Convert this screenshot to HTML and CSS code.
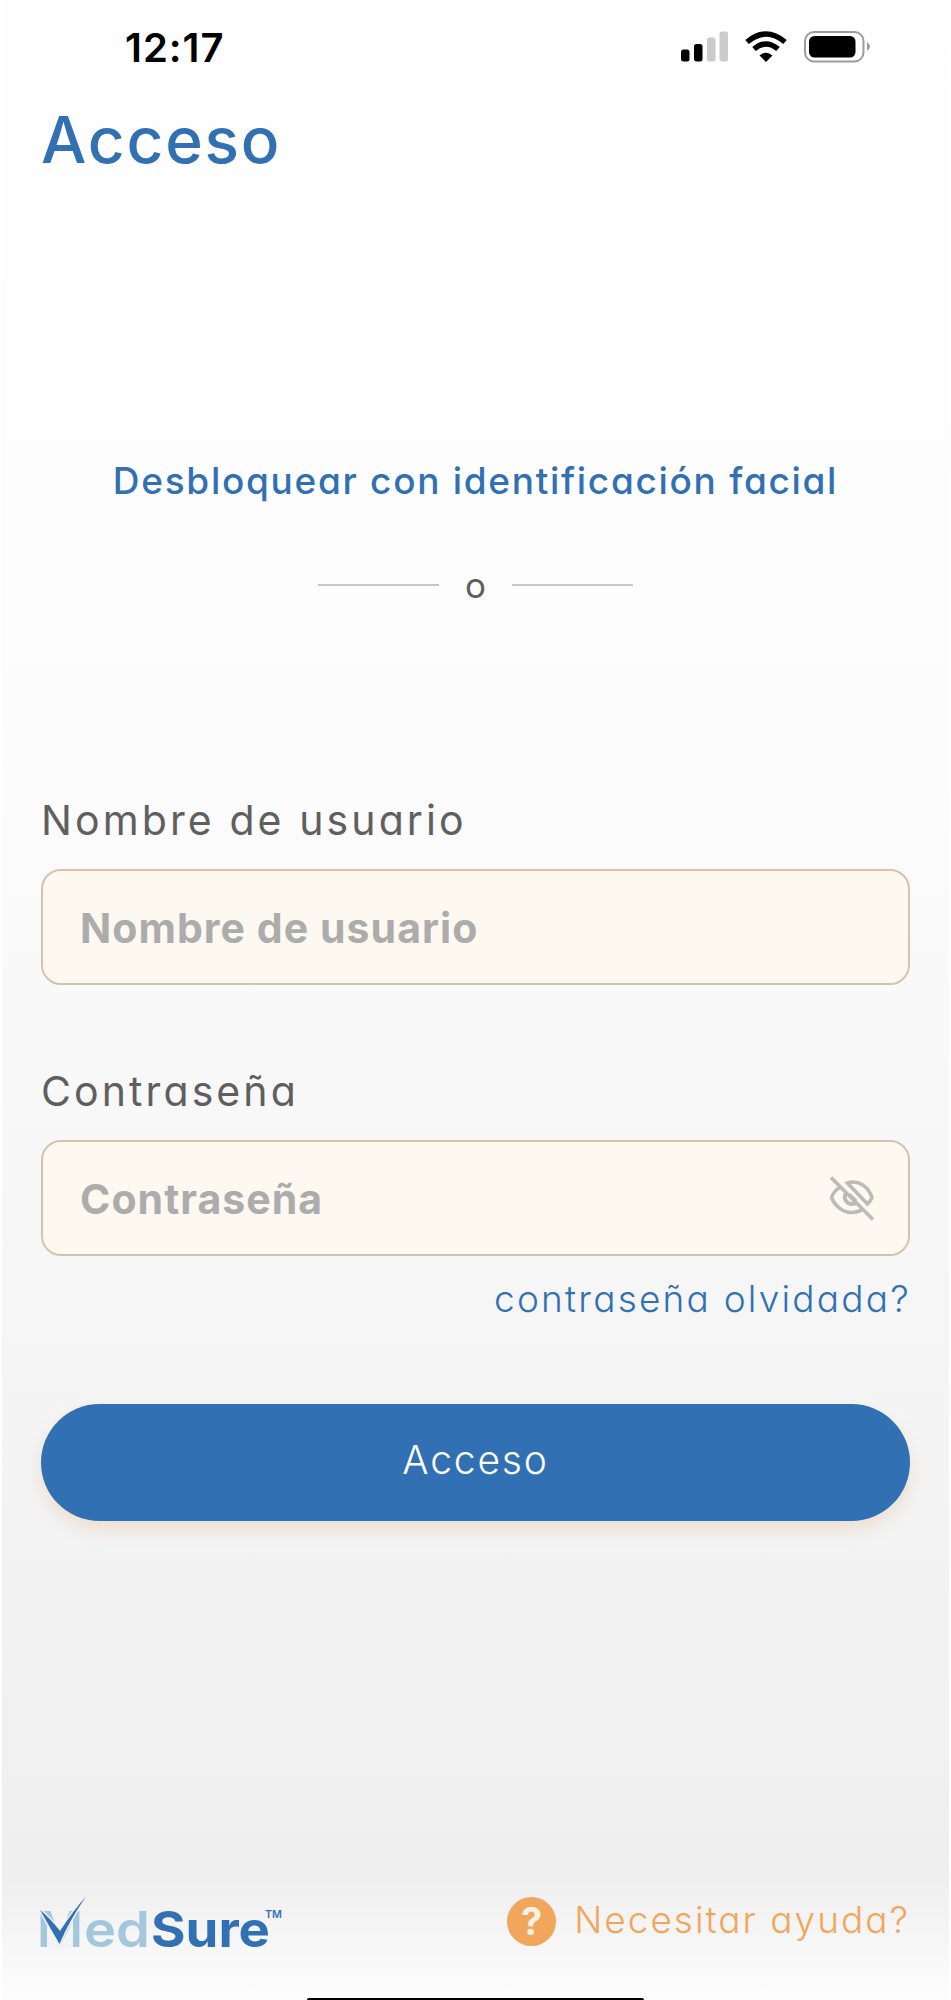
FILE: index.html
```html
<!DOCTYPE html>
<html lang="es">
<head>
    <meta charset="UTF-8">
    <title>Acceso - MedSure</title>
    <link rel="stylesheet" href="styles.css">
</head>
<body>
    <div class="screen">
        <div class="status-bar">
            <span class="time">12:17</span>
            <svg class="status-icons" width="192" height="34" viewBox="0 0 192 34">
                <g>
                    <rect x="1" y="18.5" width="8.500" height="12" rx="2.5"/>
                    <rect x="14" y="13" width="8.500" height="17.500" rx="2.5"/>
                    <rect x="27" y="6.500" width="8.500" height="24" rx="2.500" fill="#cbcbcb"/>
                    <rect x="39.500" y="0.500" width="8.500" height="30" rx="2.500" fill="#cbcbcb"/>
                </g>
                <g fill="none" stroke="#000" stroke-width="5.500">
                    <path d="M67 11Q86 -5 105 11"/>
                    <path d="M74 18Q86 8 98 18"/>
                </g>
                <path d="M79.500 24.500Q86 19 92.500 24.500L86 31Z"/>
                <rect x="125" y="1" width="58.500" height="29.500" rx="9" fill="none" stroke="#9c9c9c" stroke-width="2"/>
                <rect x="129" y="5" width="46.500" height="21.500" rx="5.500"/>
                <path d="M187 11Q193 15.500 187 20Z" fill="#9c9c9c"/>
            </svg>
        </div>

        <h1>Acceso</h1>

        <a class="face-id">Desbloquear con identificación facial</a>
        <div class="divider"><span>o</span></div>

        <form>
            <label for="user">Nombre de usuario</label>
            <div class="field">
                <input id="user" class="user" type="text" placeholder="Nombre de usuario">
            </div>

            <label for="pass" class="pass-label">Contraseña</label>
            <div class="field">
                <input id="pass" class="pass" type="password" placeholder="Contraseña">
                <svg class="eye" width="46" height="46" viewBox="0 0 46 46" fill="none" stroke="#bcbab7" stroke-width="3.500">
                    <path d="M11.500 12C7 14.500 4 18 2.500 22.500C6 31 13.500 37.500 22.500 37.500C26.500 37.500 30 36.500 33 34.500"/>
                    <path d="M18.500 8C30 4.500 39.500 12 43 22.500C42 25 40.500 27 38.500 29Z"/>
                    <path d="M17 18C14 23 17 29 23 29C25 29 26.500 28.500 28 27M20 19.500L27 26.500" stroke-width="4"/>
                    <path d="M2 2.500L44 44.500"/>
                </svg>
            </div>

            <a class="forgot">contraseña olvidada?</a>
            <button type="button">Acceso</button>
        </form>

        <footer>
            <svg class="logo" width="244" height="66" viewBox="0 0 244 66">
                <text class="logo-med" x="-3" y="52" textLength="46" lengthAdjust="spacingAndGlyphs">M</text>
                <text class="logo-med" x="44" y="52" textLength="66" lengthAdjust="spacingAndGlyphs">ed</text>
                <text class="logo-sure" x="111" y="52" textLength="119" lengthAdjust="spacingAndGlyphs">Sure</text>
                <text class="logo-tm" x="225" y="23" textLength="17" lengthAdjust="spacingAndGlyphs">TM</text>
                <path class="logo-gap" d="M7 28L19.500 52L33 26V54H7Z"/>
                <path class="logo-check" d="M0 15L19.500 49Q29 26 46 1.500Q33 16 20 36Q10 23 0 15Z"/>
            </svg>
            <a class="help">
                <span class="help-icon">?</span>
                <span class="help-text">Necesitar ayuda?</span>
            </a>
        </footer>
        <div class="home-indicator"></div>
    </div>
</body>
</html>
```
FILE: styles.css
```css
body {
    margin: 0;
    background: #fff;
    font-family: Inter, "Liberation Sans", sans-serif;
    color: #5f5f5f;
}
.screen {
    position: relative;
    box-sizing: border-box;
    height: 2000px;
    margin: 0 2px;
    padding: 0 39px 0 39px;
    overflow: hidden;
    background: linear-gradient(#fefefe 0, #fdfdfd 640px, #f8f8f8 1100px, #f3f3f3 1530px, #efefef 1880px, #fdfdfd 2000px);
    font-feature-settings: "cv11";
    white-space: nowrap;
}
.status-bar {
    display: flex;
    align-items: center;
    justify-content: space-between;
    height: 95px;
    padding: 0 38px 0 84px;
    color: #000;
}
.time {
    font-size: 40px;
    font-weight: 600;
    letter-spacing: 1px;
}
h1 {
    margin: 5px 0 0;
    font-size: 64px;
    line-height: 80px;
    font-weight: 460;
    letter-spacing: 1.8px;
    color: #3171b3;
}
.face-id {
    display: block;
    margin-top: 279px;
    text-align: center;
    font-size: 37px;
    line-height: 44px;
    font-weight: 450;
    letter-spacing: 1.7px;
    color: #3171b3;
}
.divider {
    display: flex;
    align-items: center;
    justify-content: center;
    gap: 26px;
    height: 40px;
    margin-top: 62px;
    font-size: 35px;
    line-height: 34px;
}
.divider span {
    width: 21px;
    text-align: center;
    margin-top: -1px;
}
.divider::before,
.divider::after {
    content: "";
    width: 121px;
    height: 2px;
    background: #c6c6c6;
}
form {
    margin-top: 190px;
}
label {
    display: block;
    margin-bottom: 24px;
    font-size: 41px;
    line-height: 50px;
    letter-spacing: 3.1px;
}
.pass-label {
    margin-top: 81px;
}
.field {
    display: flex;
    align-items: center;
    box-sizing: border-box;
    height: 116px;
    padding: 0 33px 0 37px;
    border: 2px solid #d6c3ad;
    border-radius: 20px;
    background: #fdf8f0;
}
input {
    flex: 1;
    min-width: 0;
    padding: 2px 0 0;
    border: 0;
    outline: 0;
    background: none;
    font: bold 41px Inter, "Liberation Sans", sans-serif;
    font-feature-settings: normal;
    letter-spacing: 1.05px;
}
input::placeholder {
    color: #acacac;
}
.forgot {
    display: block;
    margin: 21px -1px 0 0;
    text-align: right;
    font-size: 37px;
    line-height: 44px;
    font-weight: 300;
    letter-spacing: 2.2px;
    color: #3171b3;
}
button {
    display: block;
    width: 100%;
    height: 117px;
    margin-top: 83px;
    padding: 0 0 7px;
    border: 0;
    border-radius: 59px;
    background: #3171b3;
    box-shadow: 0 8px 16px rgba(222, 164, 110, 0.25);
    font: 300 39px Inter, "Liberation Sans", sans-serif;
    letter-spacing: 1.8px;
    color: #fff;
}
footer {
    display: flex;
    align-items: flex-start;
    justify-content: space-between;
    margin-top: 374px;
}
.logo {
    overflow: visible;
    margin-left: -1px;
}
.logo-med,
.logo-sure {
    font-size: 50px;
    font-weight: 600;
    fill: #a3c8dc;
    font-feature-settings: normal;
}
.logo-sure {
    font-weight: 700;
    fill: #3171b3;
}
.logo-tm {
    font-size: 11px;
    font-weight: 600;
    fill: #3171b3;
}
.logo-gap {
    fill: #f3f3f3;
}
.logo-check {
    fill: #3171b3;
    stroke: #f2f2f2;
    stroke-width: 3px;
    paint-order: stroke;
}
.help {
    display: flex;
    align-items: center;
    gap: 18px;
    margin: 2px 0 0;
    color: #f0a75c;
}
.help-icon {
    width: 49px;
    height: 49px;
    border-radius: 50%;
    background: #f0a75c;
    text-align: center;
    font-size: 38px;
    line-height: 49px;
    font-weight: 700;
    color: #fbf0e4;
}
.help-text {
    margin-top: -4px;
    font-size: 37px;
    line-height: 44px;
    font-weight: 300;
    letter-spacing: 2px;
}
.home-indicator {
    position: absolute;
    bottom: 0;
    left: 305px;
    width: 337px;
    height: 2px;
    border-radius: 4px 4px 0 0;
    background: #000;
}
```
